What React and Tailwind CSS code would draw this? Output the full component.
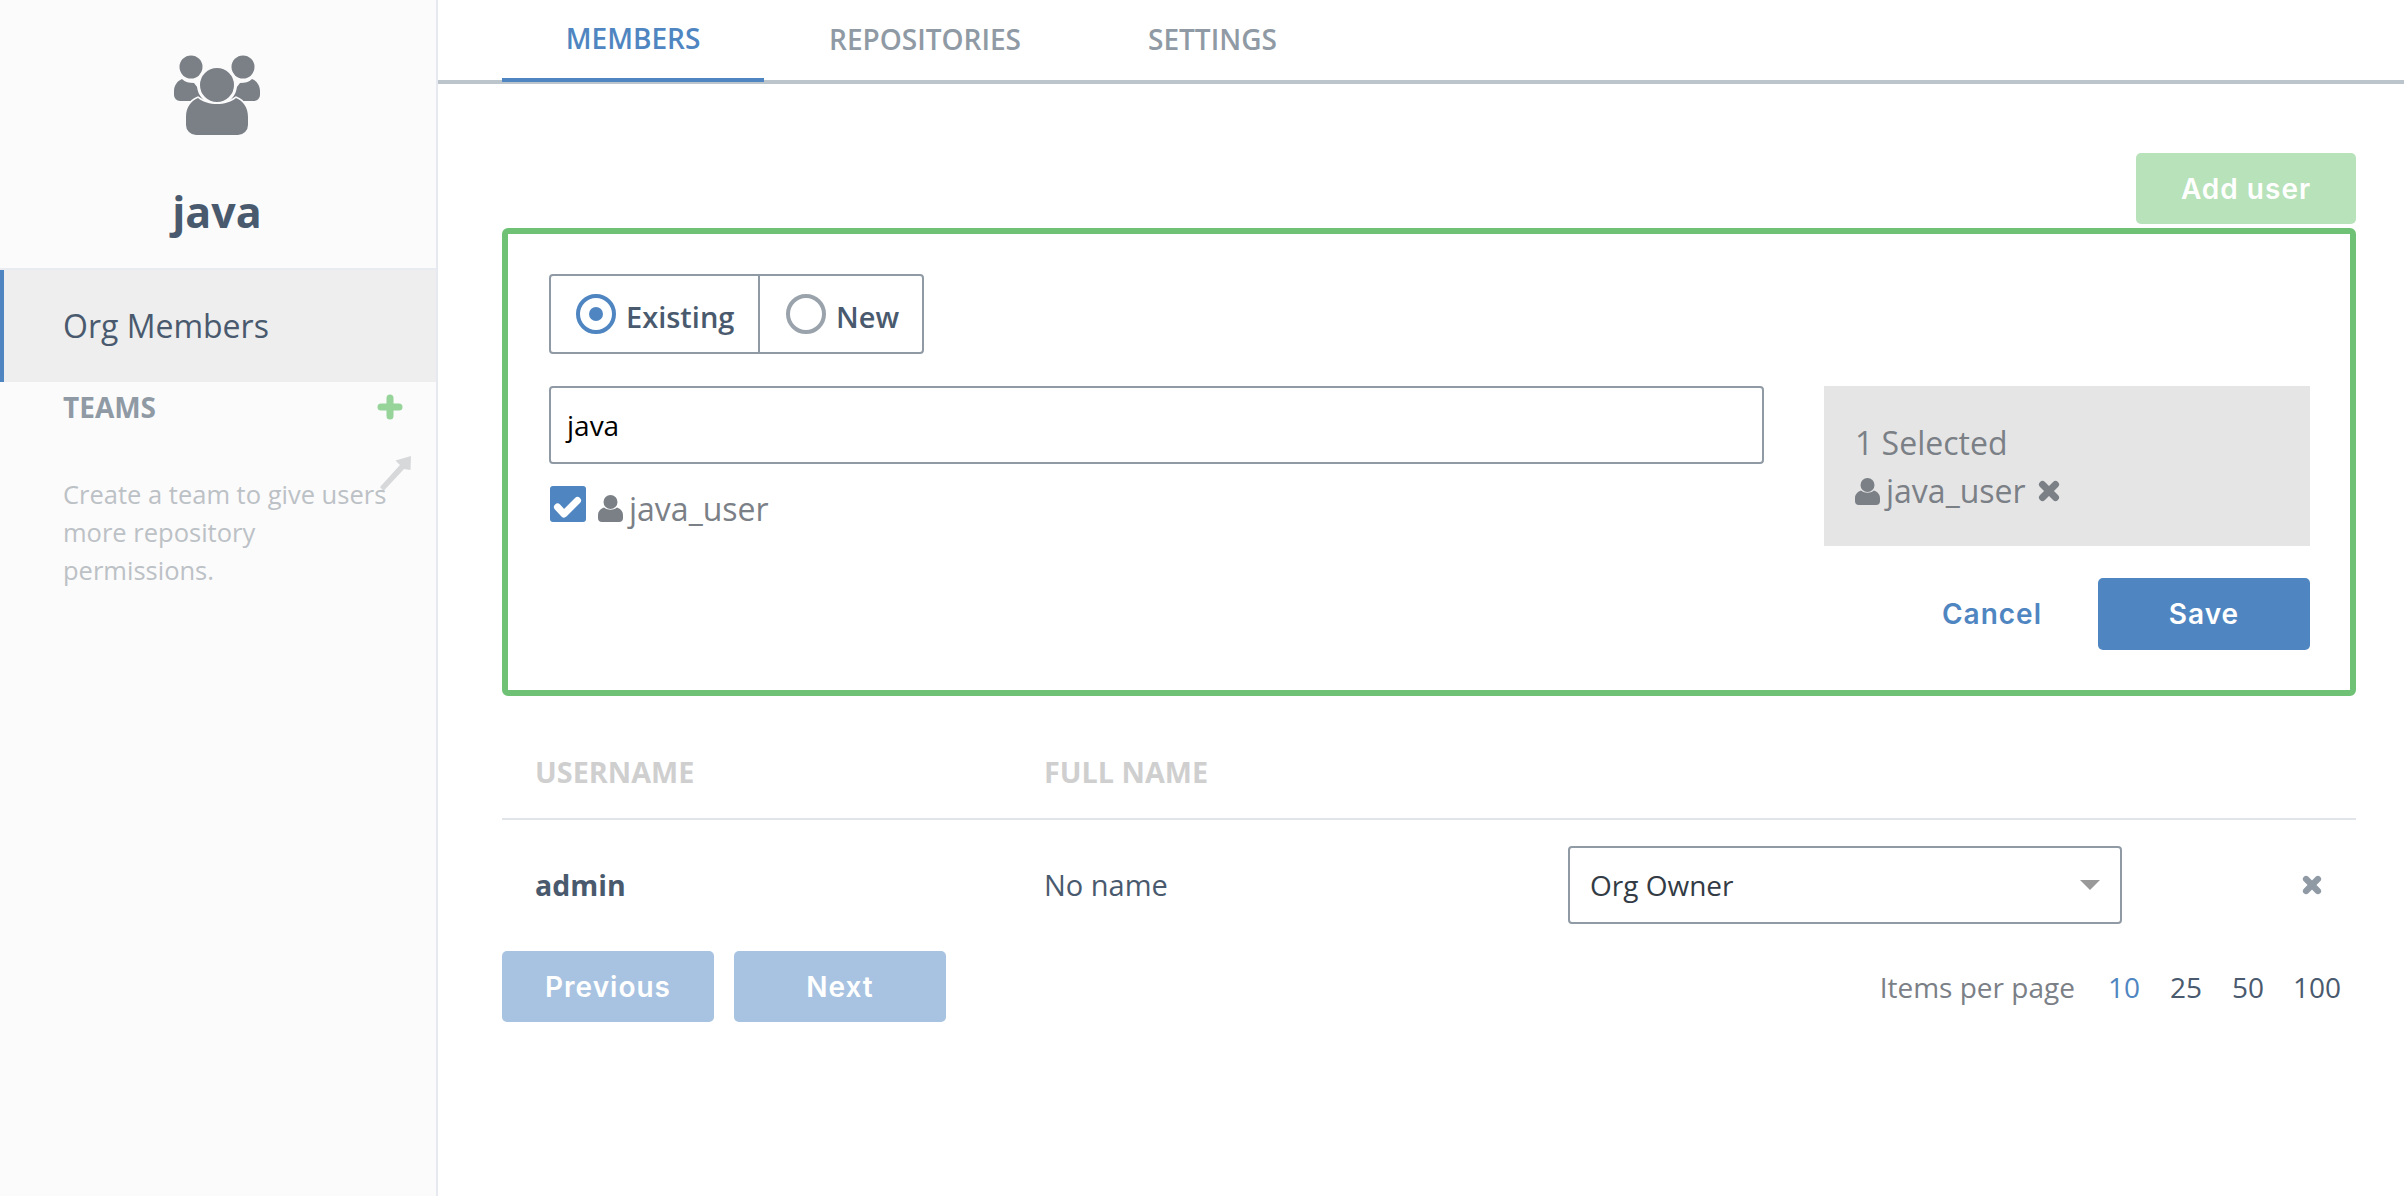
const sans = "font-['Open_Sans',sans-serif]";

function GroupIcon() {
  return (
    <svg width="86" height="80" viewBox="0 0 86 80" fill="#7b8087">
      <circle cx="17" cy="12" r="11.5" />
      <circle cx="69" cy="12" r="11.5" />
      <path d="M8 24C11 27 15 28 20 28L34 46H6A6 6 0 0 1 0 40V36C0 31 3 26 8 24Z" />
      <path d="M78 24C75 27 71 28 66 28L52 46H80A6 6 0 0 0 86 40V36C86 31 83 26 78 24Z" />
      <circle cx="43" cy="30" r="18.5" stroke="#fbfbfb" strokeWidth="3" />
      <path
        d="M12 62C12 52 17 46 24 43C29 47 36 49 43 49C50 49 57 47 62 43C69 46 74 52 74 62V70A10 10 0 0 1 64 80H22A10 10 0 0 1 12 70Z"
        stroke="#fbfbfb"
        strokeWidth="3"
        paintOrder="stroke"
      />
    </svg>
  );
}

function UserIcon() {
  return (
    <svg width="25" height="27" viewBox="0 0 25 27" fill="#7b8087" className="shrink-0">
      <circle cx="12.5" cy="7" r="7" />
      <path d="M0 20C0 16 3 13.500 6 12.500C8 14 10 14.700 12.500 14.700C15 14.700 17 14 19 12.500C22 13.500 25 16 25 20V23A4 4 0 0 1 21 27H4A4 4 0 0 1 0 23Z" />
    </svg>
  );
}

function CloseIcon({ size, color }) {
  return (
    <svg width={size} height={size} viewBox="0 0 22 22" stroke={color} strokeWidth="7" strokeLinecap="round" className="shrink-0">
      <path d="M4.500 4.500L17.500 17.500M17.500 4.500L4.500 17.500" />
    </svg>
  );
}

function Radio({ label, checked }) {
  return (
    <div className={`flex h-full items-center gap-[10px] ${checked ? 'w-[209px] pl-[25px] border-r-2 border-[#8f9aa5]' : 'pl-[26px] pr-[23px]'}`}>
      <span className={`flex h-[40px] w-[40px] items-center justify-center rounded-full border-[4px] ${checked ? 'border-[#4f86c1]' : 'border-[#9aa3ac]'}`}>
        {checked && <span className="h-[14px] w-[14px] rounded-full bg-[#4f86c1]" />}
      </span>
      <span className="pt-[5px] text-[29px] font-semibold text-[#4a5a6e]">{label}</span>
    </div>
  );
}

export default function App() {
  return (
    <div className={`flex min-h-[1196px] w-[2404px] bg-white ${sans}`}>
      {/* Sidebar */}
      <aside className="w-[438px] shrink-0 border-r-2 border-[#e6eaf0] bg-[#fbfbfb]">
        <div className="flex h-[270px] flex-col items-center border-b-2 border-[#e8ebef] pt-[55px] pr-[2px]">
          <GroupIcon />
          <h1 className="mt-[48px] text-[43px] leading-[58px] font-bold text-[#4a5a6e]">java</h1>
        </div>
        <div className="flex h-[112px] items-center border-l-4 border-[#4f86c1] bg-[#eeeeee] pl-[59px] text-[32px] text-[#4a5a6e]">
          Org Members
        </div>
        <div className="flex items-center justify-between pt-[6px] pr-[33px] pl-[63px]">
          <span className="text-[28px] leading-[38px] font-bold text-[#8f9aa5]">TEAMS</span>
          <svg width="26" height="26" viewBox="0 0 26 26" stroke="#96d49a" strokeWidth="7" strokeLinecap="round">
            <path d="M13 4V22M4 13H22" />
          </svg>
        </div>
        <div className="pr-[25px] pl-[63px]">
          <svg width="31" height="36" viewBox="0 0 31 36" className="mt-[30px] -mb-[17px] ml-auto" fill="#d6d8da">
            <path d="M31 0L15.500 4.500L20 9L0 31L3.500 35L24 13L30.500 14Z" />
          </svg>
          <p className="text-[25.500px] leading-[38px] text-[#bcc1c6]">
            Create a team to give users
            <br />
            more repository
            <br />
            permissions.
          </p>
        </div>
      </aside>

      {/* Main */}
      <main className="flex-1">
        <nav className="flex h-[84px] border-b-4 border-[#bcc5cc] pl-[64px] text-[28px] font-semibold">
          <div className="flex h-[82px] w-[262px] items-center justify-center border-b-4 border-[#4f86c1] pb-[3px] text-[#4f86c1]">MEMBERS</div>
          <div className="flex h-[80px] items-center px-[65px] pb-[3px] text-[#8f9aa5]">REPOSITORIES</div>
          <div className="flex h-[80px] items-center pl-[62px] pb-[3px] text-[#8f9aa5]">SETTINGS</div>
        </nav>

        <div className="pr-[48px] pl-[64px]">
          <div className="flex justify-end pt-[69px] pb-[4px]">
            <button className="h-[71px] w-[220px] rounded-[5px] bg-[#b8e2ba] font-['Inter',sans-serif] text-[28px] font-semibold tracking-[1px] text-white">
              Add user
            </button>
          </div>

          {/* Add member form */}
          <div className="h-[468px] rounded-[6px] border-[6px] border-[#6fc275] pt-[40px] pr-[40px] pl-[41px]">
            <div className="flex h-[80px] w-fit items-center rounded-[4px] border-2 border-[#8f9aa5]">
              <Radio label="Existing" checked />
              <Radio label="New" />
            </div>
            <div className="mt-[32px] flex justify-between">
              <div className="w-[1215px]">
                <div className="flex h-[78px] items-center rounded-[4px] border-2 border-[#8f9aa5] pl-[16px] text-[28px] text-black">java</div>
                <div className="mt-[21px] flex items-start">
                  <span className="mt-[1px] ml-[1px] h-[36px] w-[36px] rounded-[3px] bg-[#4f86c1]">
                    <svg width="36" height="36" viewBox="0 0 36 36" fill="none" stroke="#fff" strokeWidth="7" strokeLinecap="round" strokeLinejoin="round">
                      <path d="M7.500 21L14 28L27.500 14.500" />
                    </svg>
                  </span>
                  <span className="mt-[10px] ml-[12px]"><UserIcon /></span>
                  <span className="ml-[6px] text-[32px] leading-[48px] text-[#7b8087]">java_user</span>
                </div>
              </div>
              <div className="h-[160px] w-[486px] bg-[#e5e5e5] pt-[33px] pl-[31px] text-[32px] leading-[48px] text-[#7b8087]">
                <div>1 Selected</div>
                <div className="flex items-center">
                  <UserIcon />
                  <span className="ml-[6px]">java_user</span>
                  <span className="ml-[12px]"><CloseIcon size={22} color="#7b8087" /></span>
                </div>
              </div>
            </div>
            <div className="flex items-center justify-end pt-[32px]">
              <span className="font-['Inter',sans-serif] text-[28px] font-semibold tracking-[1px] text-[#4f86c1]">Cancel</span>
              <button className="ml-[56px] h-[72px] w-[212px] rounded-[5px] bg-[#4f86c1] font-['Inter',sans-serif] text-[28px] font-semibold tracking-[1px] text-white">
                Save
              </button>
            </div>
          </div>

          {/* Members table */}
          <div className="flex h-[124px] items-end border-b-2 border-[#e1e5e9] pb-[25px] text-[28.800px] font-bold text-[#cfcfcf]">
            <div className="w-[542px] pl-[33px]">USERNAME</div>
            <div>FULL NAME</div>
          </div>
          <div className="flex h-[130px] items-center text-[28px] text-[#4a5a6e]">
            <div className="w-[542px] pl-[33px] text-[28.500px] font-bold">admin</div>
            <div className="w-[524px] text-[29px]">No name</div>
            <div className="flex h-[78px] w-[554px] items-center justify-between rounded-[4px] border-2 border-[#8f9aa5] pr-[20px] pl-[20px] text-[#333b45]">
              Org Owner
              <span className="h-0 w-0 border-x-[10px] border-t-[10px] border-x-transparent border-t-[#999]" />
            </div>
            <span className="ml-[180px]"><CloseIcon size={20} color="#8f9aa5" /></span>
          </div>
          <div className="mt-[1px] flex items-center justify-between">
            <div className="flex gap-[20px] font-['Inter',sans-serif] text-[28px] font-semibold tracking-[1px] text-white">
              <button className="h-[71px] w-[212px] rounded-[5px] bg-[#a8c3e1]">Previous</button>
              <button className="h-[71px] w-[212px] rounded-[5px] bg-[#a8c3e1]">Next</button>
            </div>
            <div className="flex items-center pr-[15px] text-[28px] text-[#4a5a6e]">
              <span className="mr-[33px] text-[#7b8087]">Items per page</span>
              <span className="text-[#4f86c1]">10</span>
              <span className="ml-[30px]">25</span>
              <span className="ml-[30px]">50</span>
              <span className="ml-[29px]">100</span>
            </div>
          </div>
        </div>
      </main>
    </div>
  );
}
